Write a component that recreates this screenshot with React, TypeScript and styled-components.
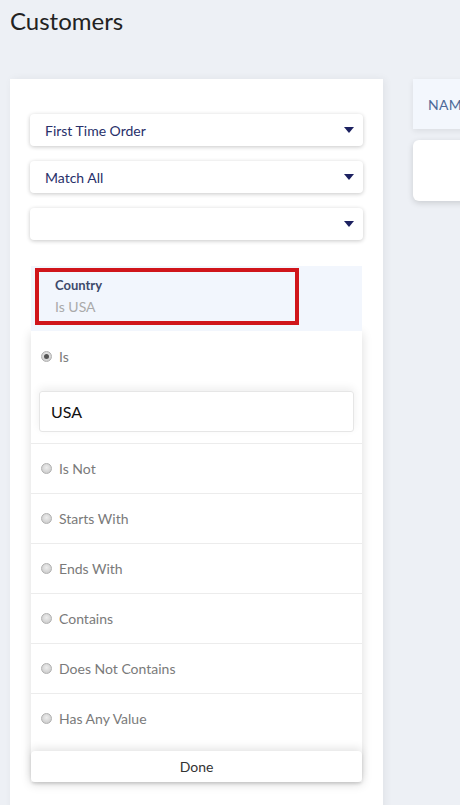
import styled, { createGlobalStyle } from "styled-components";

const GlobalStyle = createGlobalStyle`
  html, body {
    margin: 0;
    padding: 0;
    background: #edf0f5;
    font-family: Lato, "Open Sans", sans-serif;
    overflow: hidden;
  }
  * { box-sizing: border-box; }
`;

const Page = styled.div`
  padding: 7px 0 0 10px;
  height: 805px;
  overflow: hidden;
`;

const Title = styled.h1`
  margin: 0 0 44px;
  font-size: 24px;
  line-height: 28px;
  font-weight: 400;
  color: #222;
`;

const Columns = styled.div`
  display: flex;
  gap: 30px;
  align-items: flex-start;
`;

const FilterPanel = styled.div`
  flex: 0 0 373px;
  min-height: 760px;
  background: #fff;
  box-shadow: 2px 0 8px rgba(0, 0, 0, 0.06);
  padding: 35px 20px;
  display: flex;
  flex-direction: column;
`;

const SelectStack = styled.div`
  display: flex;
  flex-direction: column;
  gap: 15px;
`;

const Select = styled.div`
  height: 32px;
  background: #fff;
  border-radius: 4px;
  box-shadow: 0 1px 4px rgba(0, 0, 0, 0.22);
  display: flex;
  align-items: center;
  justify-content: space-between;
  padding: 0 9px 0 15px;
  font-size: 14px;
  color: #28306a;
`;

const Caret = styled.span`
  width: 0;
  height: 0;
  border-left: 5.5px solid transparent;
  border-right: 5.5px solid transparent;
  border-top: 6px solid #1c2160;
`;

const Condition = styled.div`
  position: relative;
  margin: 26px 1px 0;
  height: 65px;
  background: #f2f6fd;
  padding: 11px 24px;
  display: flex;
  flex-direction: column;
  gap: 5px;
`;

const Highlight = styled.div`
  position: absolute;
  left: 4px;
  top: 2px;
  width: 264px;
  height: 57px;
  border: 4px solid #d0151b;
`;

const ConditionName = styled.div`
  font-size: 13px;
  font-weight: 700;
  color: #3d4a6b;
`;

const ConditionValue = styled.div`
  font-size: 14px;
  color: #aaa;
`;

const Dropdown = styled.div`
  margin: 0 1px;
  background: #fff;
  box-shadow: 0 2px 10px rgba(0, 0, 0, 0.14);
  display: flex;
  flex-direction: column;
`;

const Option = styled.div<{ $first?: boolean }>`
  height: 50px;
  display: flex;
  align-items: center;
  gap: 7px;
  padding-left: 10px;
  font-size: 14px;
  color: #7a7a7a;
  border-top: ${(p) => (p.$first ? "none" : "1px solid #ececec")};
`;

const Radio = styled.span<{ $checked?: boolean }>`
  width: 11px;
  height: 11px;
  border-radius: 50%;
  background: radial-gradient(circle at 50% 40%, #eeeeee, #c4c4c4);
  border: 1px solid #b0b0b0;
  display: flex;
  align-items: center;
  justify-content: center;
  &::after {
    content: "";
    width: 5px;
    height: 5px;
    border-radius: 50%;
    background: ${(p) => (p.$checked ? "#555" : "transparent")};
  }
`;

const ValueWrap = styled.div`
  padding: 10px 8px 11px;
`;

const ValueInput = styled.div`
  height: 41px;
  border: 1px solid #e6e6e6;
  border-radius: 3px;
  box-shadow: 0 -3px 8px rgba(0, 0, 0, 0.07);
  display: flex;
  align-items: center;
  padding-left: 11px;
  font-size: 16px;
  color: #111;
`;

const DoneBar = styled.div`
  margin-top: 8px;
  height: 31px;
  border-radius: 4px;
  background: #fff;
  box-shadow: 0 -3px 8px rgba(0, 0, 0, 0.1), 0 2px 3px rgba(0, 0, 0, 0.12);
  display: flex;
  align-items: center;
  justify-content: center;
  font-size: 14px;
  color: #333;
`;

const TableArea = styled.div`
  flex: 1;
  display: flex;
  flex-direction: column;
  gap: 11px;
`;

const TableHead = styled.div`
  height: 50px;
  background: #f3f7fd;
  box-shadow: 0 2px 6px rgba(0, 0, 0, 0.08);
  display: flex;
  align-items: center;
  padding-left: 15px;
  font-size: 14px;
  letter-spacing: 0.3px;
  color: #4d6998;
  white-space: nowrap;
  overflow: hidden;
`;

const TableBody = styled.div`
  height: 61px;
  background: #fff;
  border-radius: 6px 0 0 6px;
  box-shadow: 0 2px 6px rgba(0, 0, 0, 0.15);
`;

const SELECTS = ["First Time Order", "Match All", ""];
const OPTIONS = [
  "Is Not",
  "Starts With",
  "Ends With",
  "Contains",
  "Does Not Contains",
  "Has Any Value",
];

export default function App() {
  return (
    <>
      <GlobalStyle />
      <Page>
        <Title>Customers</Title>
        <Columns>
          <FilterPanel>
            <SelectStack>
              {SELECTS.map((label, i) => (
                <Select key={i}>
                  <span>{label}</span>
                  <Caret />
                </Select>
              ))}
            </SelectStack>
            <Condition>
              <Highlight />
              <ConditionName>Country</ConditionName>
              <ConditionValue>Is USA</ConditionValue>
            </Condition>
            <Dropdown>
              <Option $first>
                <Radio $checked />
                Is
              </Option>
              <ValueWrap>
                <ValueInput>USA</ValueInput>
              </ValueWrap>
              {OPTIONS.map((o) => (
                <Option key={o}>
                  <Radio />
                  {o}
                </Option>
              ))}
              <DoneBar>Done</DoneBar>
            </Dropdown>
          </FilterPanel>
          <TableArea>
            <TableHead>NAME</TableHead>
            <TableBody />
          </TableArea>
        </Columns>
      </Page>
    </>
  );
}
